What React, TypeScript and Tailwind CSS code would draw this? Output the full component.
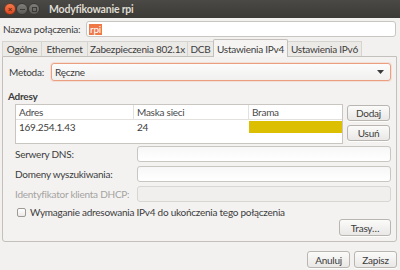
import React from "react";

const font = { fontFamily: 'Lato, "Noto Sans", "DejaVu Sans", sans-serif' };

function Btn({ children, className = "" }: { children: React.ReactNode; className?: string }) {
  return (
    <div
      className={
        "flex items-center justify-center rounded-[3px] border border-[#b9b6b1] bg-gradient-to-b from-[#fbfbfa] to-[#e9e8e6] text-[#3c3c3c] shadow-[0_1px_0_rgba(255,255,255,0.8)] " +
        className
      }
    >
      {children}
    </div>
  );
}

function Input({ className = "", disabled = false }: { className?: string; disabled?: boolean }) {
  return (
    <div
      className={
        "h-[16px] rounded-[3px] border " +
        (disabled ? "border-[#d8d6d2] bg-[#f0efee] " : "border-[#c9c6c1] bg-gradient-to-b from-[#f7f7f7] to-[#ffffff] ") +
        className
      }
    />
  );
}

export default function App() {
  return (
    <div
      className="w-[400px] h-[270px] overflow-hidden bg-[#f2f1f0] text-[#3c3c3c] text-[10px] tracking-[-0.25px] leading-none"
      style={font}
    >
      {/* Title bar */}
      <div className="h-[18px] flex items-center bg-gradient-to-b from-[#4a4945] to-[#3b3a36] pl-[4px]">
        <div className="w-[12px] h-[12px] rounded-full bg-gradient-to-b from-[#f47a4c] to-[#e0471c] border border-[#6b3a25] flex items-center justify-center">
          <span className="text-[8px] leading-none text-[#5a2a16] font-bold">×</span>
        </div>
        <div className="w-[12px] h-[12px] rounded-full bg-gradient-to-b from-[#807e79] to-[#5e5c58] border border-[#3a3936] flex items-center justify-center">
          <div className="w-[5px] h-[1px] bg-[#3c3b37]" />
        </div>
        <div className="w-[12px] h-[12px] rounded-full bg-gradient-to-b from-[#807e79] to-[#5e5c58] border border-[#3a3936] flex items-center justify-center">
          <div className="w-[5px] h-[5px] border border-[#3c3b37]" />
        </div>
        <div className="ml-[9px] text-[10.5px] tracking-[-0.2px] font-bold text-[#dfdbd2] whitespace-nowrap">Modyfikowanie rpi</div>
      </div>

      {/* Name row */}
      <div className="mt-[3px] h-[16px] flex items-center">
        <div className="w-[86px] pl-[3px] whitespace-nowrap">Nazwa połączenia:</div>
        <div className="w-[310px] h-[16px] rounded-[3px] border border-[#c9c6c1] bg-white flex items-center pl-[2px]">
          <span className="bg-[#f07746] text-white px-[1px] h-[11px] flex items-center">rpi</span>
        </div>
      </div>

      {/* Tabs */}
      <div className="mt-[2px] ml-[2px] flex items-end h-[17px] relative z-10">
        {[
          ["Ogólne", 39],
          ["Ethernet", 46],
          ["Zabezpieczenia 802.1x", 100],
          ["DCB", 26],
        ].map(([t, w]) => (
          <div
            key={t as string}
            className="h-[15px] flex items-center justify-center border-t border-l border-[#d6d4cf] bg-[#eceae7] whitespace-nowrap"
            style={{ width: w as number }}
          >
            {t}
          </div>
        ))}
        <div className="w-[75px] h-[18px] -mb-[1px] flex items-center justify-center border border-b-0 border-[#c4c1bc] bg-[#f5f4f3] rounded-t-[2px] whitespace-nowrap">
          Ustawienia IPv4
        </div>
        <div className="w-[74px] h-[15px] flex items-center justify-center border-t border-r border-[#d6d4cf] bg-[#eceae7] whitespace-nowrap">
          Ustawienia IPv6
        </div>
      </div>

      {/* Panel */}
      <div className="ml-[2px] w-[395px] h-[186px] border border-[#c4c1bc] rounded-b-[3px] bg-[#f3f2f1] flex flex-col">
        {/* Metoda */}
        <div className="mt-[6px] flex items-center h-[18px]">
          <div className="w-[48px] pl-[6px]">Metoda:</div>
          <div className="w-[340px] h-[18px] rounded-[3px] border border-[#ec9f80] bg-gradient-to-b from-[#fcfcfc] to-[#f1f0ef] flex items-center pl-[3px] pr-[6px] justify-between shadow-[0_0_0_1px_rgba(240,119,70,0.15)]">
            <span>Ręczne</span>
            <svg width="7" height="4" viewBox="0 0 7 4">
              <path d="M0 0 L7 0 L3.5 4 Z" fill="#3c3c3c" />
            </svg>
          </div>
        </div>

        {/* Adresy */}
        <div className="mt-[9px] pl-[5px] font-bold h-[12px] flex items-center">Adresy</div>

        <div className="mt-[2px] flex">
          <div className="ml-[12px] w-[328px] h-[40px] border border-[#c9c6c1] bg-white flex flex-col">
            <div className="h-[15px] flex border-b border-[#e3e1de] text-[#4a4a4a]">
              <div className="w-[118px] pl-[3px] flex items-center border-r border-[#e3e1de]">Adres</div>
              <div className="w-[115px] pl-[3px] flex items-center border-r border-[#e3e1de]">Maska sieci</div>
              <div className="flex-1 pl-[3px] flex items-center">Brama</div>
            </div>
            <div className="h-[14px] flex">
              <div className="w-[118px] pl-[3px] flex items-center">169.254.1.43</div>
              <div className="w-[115px] pl-[3px] flex items-center">24</div>
              <div className="flex-1 mt-[1px] h-[12px] bg-[#dcbf00]" />
            </div>
          </div>
          <div className="ml-[4px] flex flex-col">
            <Btn className="mt-[1px] w-[43px] h-[16px]">Dodaj</Btn>
            <Btn className="mt-[4px] w-[43px] h-[16px]">Usuń</Btn>
          </div>
        </div>

        {/* Form rows */}
        <div className="mt-[2px] flex flex-col gap-[4px]">
          <div className="flex items-center h-[16px]">
            <div className="w-[134px] pl-[12px] whitespace-nowrap">Serwery DNS:</div>
            <Input className="w-[254px]" />
          </div>
          <div className="flex items-center h-[16px]">
            <div className="w-[134px] pl-[12px] whitespace-nowrap">Domeny wyszukiwania:</div>
            <Input className="w-[254px]" />
          </div>
          <div className="flex items-center h-[16px]">
            <div className="w-[134px] pl-[12px] whitespace-nowrap text-[#a5a3a0]">Identyfikator klienta DHCP:</div>
            <Input className="w-[254px]" disabled />
          </div>
        </div>

        <div className="mt-[4px] h-[12px] flex items-center pl-[14px]">
          <div className="w-[9px] h-[9px] rounded-[2px] border border-[#9d9a95] bg-gradient-to-b from-[#ffffff] to-[#ebeae8]" />
          <div className="ml-[4px] whitespace-nowrap">Wymaganie adresowania IPv4 do ukończenia tego połączenia</div>
        </div>

        <div className="mt-[1px] flex justify-end pr-[5px]">
          <Btn className="w-[52px] h-[17px]">Trasy…</Btn>
        </div>
      </div>

      {/* Bottom buttons */}
      <div className="mt-[9px] flex justify-end pr-[3px] gap-[4px]">
        <Btn className="w-[43px] h-[17px]">Anuluj</Btn>
        <Btn className="w-[43px] h-[17px]">Zapisz</Btn>
      </div>
    </div>
  );
}
